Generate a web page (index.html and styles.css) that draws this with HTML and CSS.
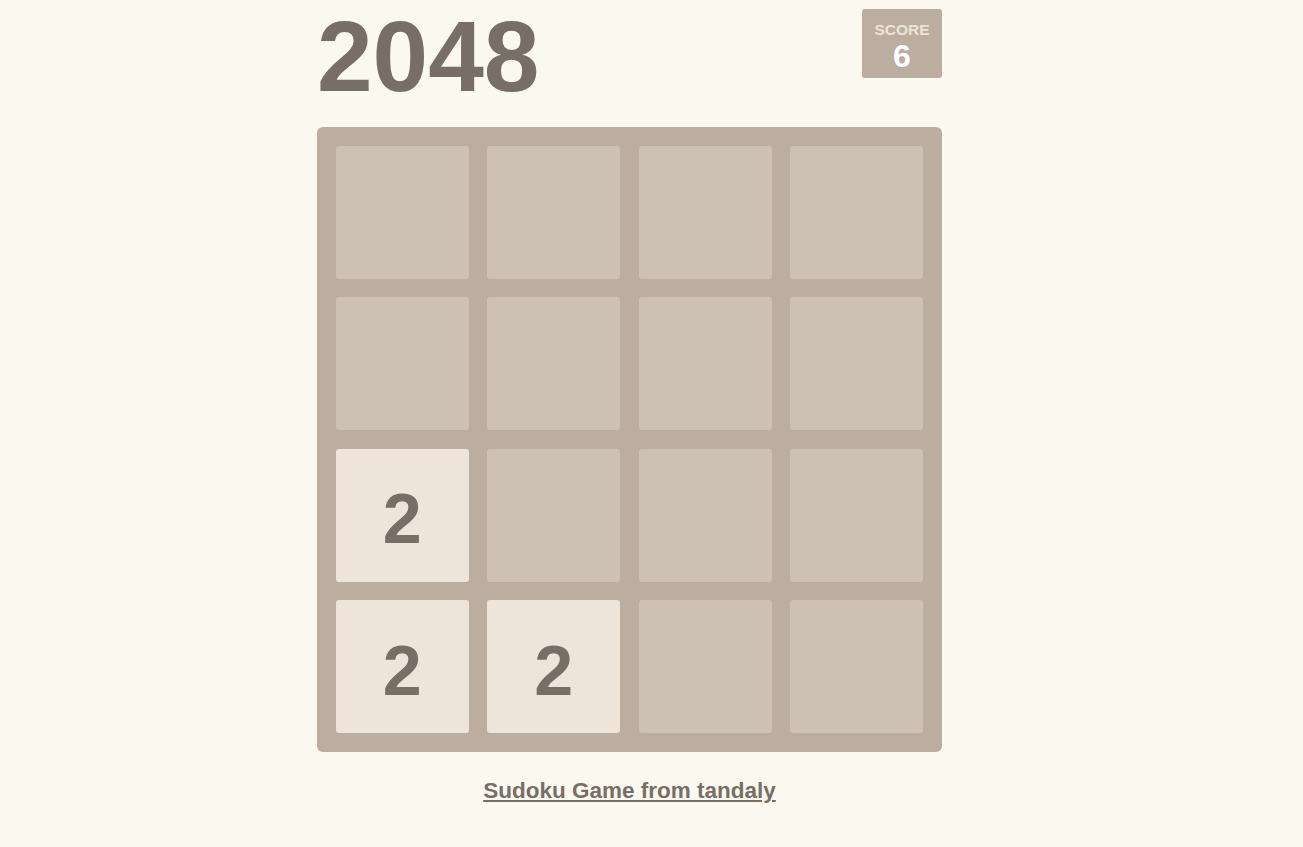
FILE: index.html
```html
<!DOCTYPE html>
<html>
<head>
<meta charset="utf-8">
<title>2048</title>
<link rel="stylesheet" href="styles.css">
</head>
<body>
<div class="container">
  <div class="heading">
    <h1 class="title">2048</h1>
    <div class="score">
      <div class="score-label">SCORE</div>
      <div class="score-value">6</div>
    </div>
  </div>
  <div class="board">
    <div class="cell"></div><div class="cell"></div><div class="cell"></div><div class="cell"></div>
    <div class="cell"></div><div class="cell"></div><div class="cell"></div><div class="cell"></div>
    <div class="cell tile-2">2</div><div class="cell"></div><div class="cell"></div><div class="cell"></div>
    <div class="cell tile-2">2</div><div class="cell tile-2">2</div><div class="cell"></div><div class="cell"></div>
  </div>
  <p class="footer"><a href="#" class="footer-link">Sudoku Game from tandaly</a></p>
</div>
</body>
</html>
```
FILE: styles.css
```css
html, body {
  margin: 0;
  padding: 0;
  background: #faf8ef;
  font-family: "Liberation Sans", Arial, sans-serif;
  color: #776e65;
}
.container {
  width: 625px;
  margin-left: 317px;
}
.heading {
  display: flex;
  justify-content: space-between;
  align-items: flex-start;
  height: 127px;
}
.title {
  margin: 0;
  font-size: 100px;
  font-weight: bold;
  line-height: 113px;
  color: #776e65;
}
.score {
  margin-top: 9px;
  width: 80px;
  height: 69px;
  background: #bbada0;
  border-radius: 3px;
  text-align: center;
  box-sizing: border-box;
  padding-top: 12px;
}
.score-label {
  font-size: 15.5px;
  font-weight: bold;
  color: #eee4da;
  line-height: 18px;
}
.score-value {
  font-size: 32px;
  font-weight: bold;
  color: #ffffff;
  line-height: 34px;
}
.board {
  display: grid;
  grid-template-columns: repeat(4, 1fr);
  gap: 18.75px;
  padding: 18.75px;
  background: #bbada0;
  border-radius: 6px;
  box-sizing: border-box;
  width: 625px;
}
.cell {
  aspect-ratio: 1 / 1;
  background: #cdc1b4;
  border-radius: 3px;
  display: flex;
  align-items: center;
  justify-content: center;
  font-size: 70px;
  font-weight: bold;
  color: #776e65;
  padding-top: 8px;
  box-sizing: border-box;
}
.tile-2 {
  background: #eee4da;
}
.footer {
  margin: 26px 0 0;
  text-align: center;
  font-size: 22.5px;
  line-height: 26px;
}
.footer-link {
  color: #776e65;
  font-weight: bold;
  text-decoration: underline;
}
```
